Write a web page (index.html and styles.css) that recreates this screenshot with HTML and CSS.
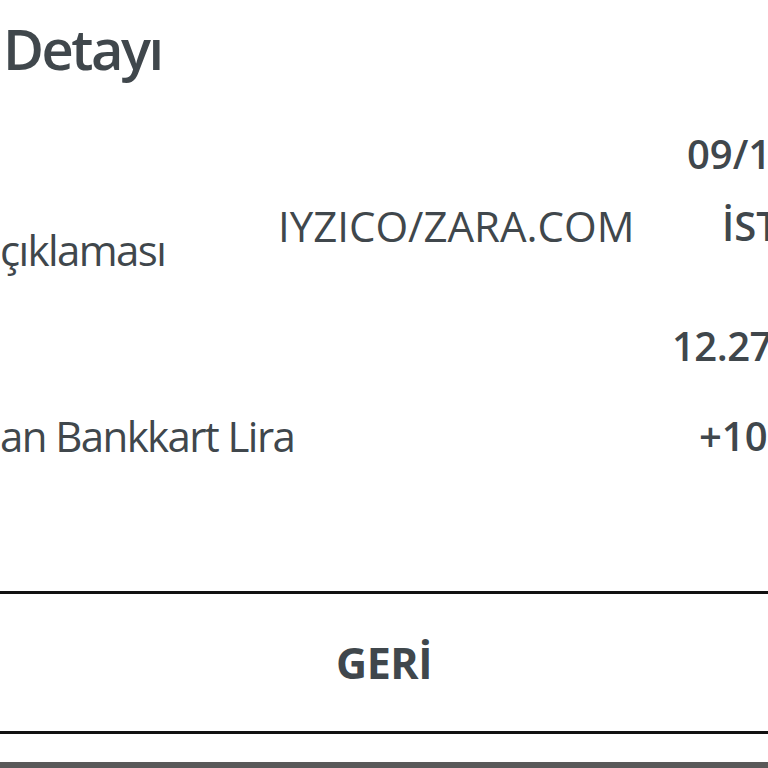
FILE: index.html
```html
<!DOCTYPE html>
<html lang="tr">
<head>
<meta charset="utf-8">
<link rel="stylesheet" href="styles.css">
</head>
<body>
<div class="page">
  <h1 class="title">Detayı</h1>
  <div class="row row-desc">
    <div class="label label-desc">çıklaması</div>
    <div class="mid">IYZICO/ZARA.COM</div>
    <div class="val">
      <div class="date">09/11/2023</div>
      <div class="city">İSTANBUL</div>
    </div>
  </div>
  <div class="row row-amount">
    <div class="label"></div>
    <div class="mid"></div>
    <div class="val"><div class="amount">12.270,00 TL</div></div>
  </div>
  <div class="row row-points">
    <div class="label label-points">an Bankkart Lira</div>
    <div class="mid"></div>
    <div class="val"><div class="points">+100,00</div></div>
  </div>
  <div class="button">GERİ</div>
  <div class="bottom-bar"></div>
</div>
</body>
</html>
```
FILE: styles.css
```css
html, body {
  margin: 0;
  padding: 0;
  background: #ffffff;
}
body {
  width: 768px;
  height: 768px;
  overflow: hidden;
  font-family: "Open Sans", "Liberation Sans", sans-serif;
  color: #40474c;
}
.page {
  width: 768px;
  height: 768px;
  display: flex;
  flex-direction: column;
  overflow: hidden;
}
.title {
  margin: 15px 0 0 3px;
  font-size: 56px;
  line-height: 1.2;
  font-weight: 600;
  letter-spacing: -2.5px;
  white-space: nowrap;
}
.row {
  display: grid;
  grid-template-columns: 278px 394px 1fr;
  white-space: nowrap;
}
.row-desc { height: 218px; }
.row-amount { height: 90px; }
.row-points { height: 201px; }
.label {
  font-size: 42px;
  line-height: 1.2;
  font-weight: 400;
  letter-spacing: -1.6px;
}
.label-desc { padding-top: 143px; }
.label-points { padding-top: 21px; }
.mid {
  font-size: 42px;
  line-height: 1.2;
  font-weight: 500;
  padding-top: 119px;
}
.row-amount .mid, .row-points .mid { padding-top: 0; }
.val {
  font-size: 40px;
  line-height: 1.2;
  font-weight: 600;
}
.date {
  margin: 48px 0 0 15px;
}
.city {
  margin: 24px 0 0 50px;
}
.amount {
  margin: 22px 0 0 0;
  letter-spacing: -0.5px;
}
.points {
  margin: 22px 0 0 27px;
}
.button {
  height: 137px;
  border-top: 3px solid #111111;
  border-bottom: 3px solid #111111;
  display: flex;
  align-items: center;
  justify-content: center;
  font-size: 43px;
  font-weight: 700;
  letter-spacing: -0.5px;
}
.bottom-bar {
  margin-top: 28px;
  height: 6px;
  background: #595959;
}
```
